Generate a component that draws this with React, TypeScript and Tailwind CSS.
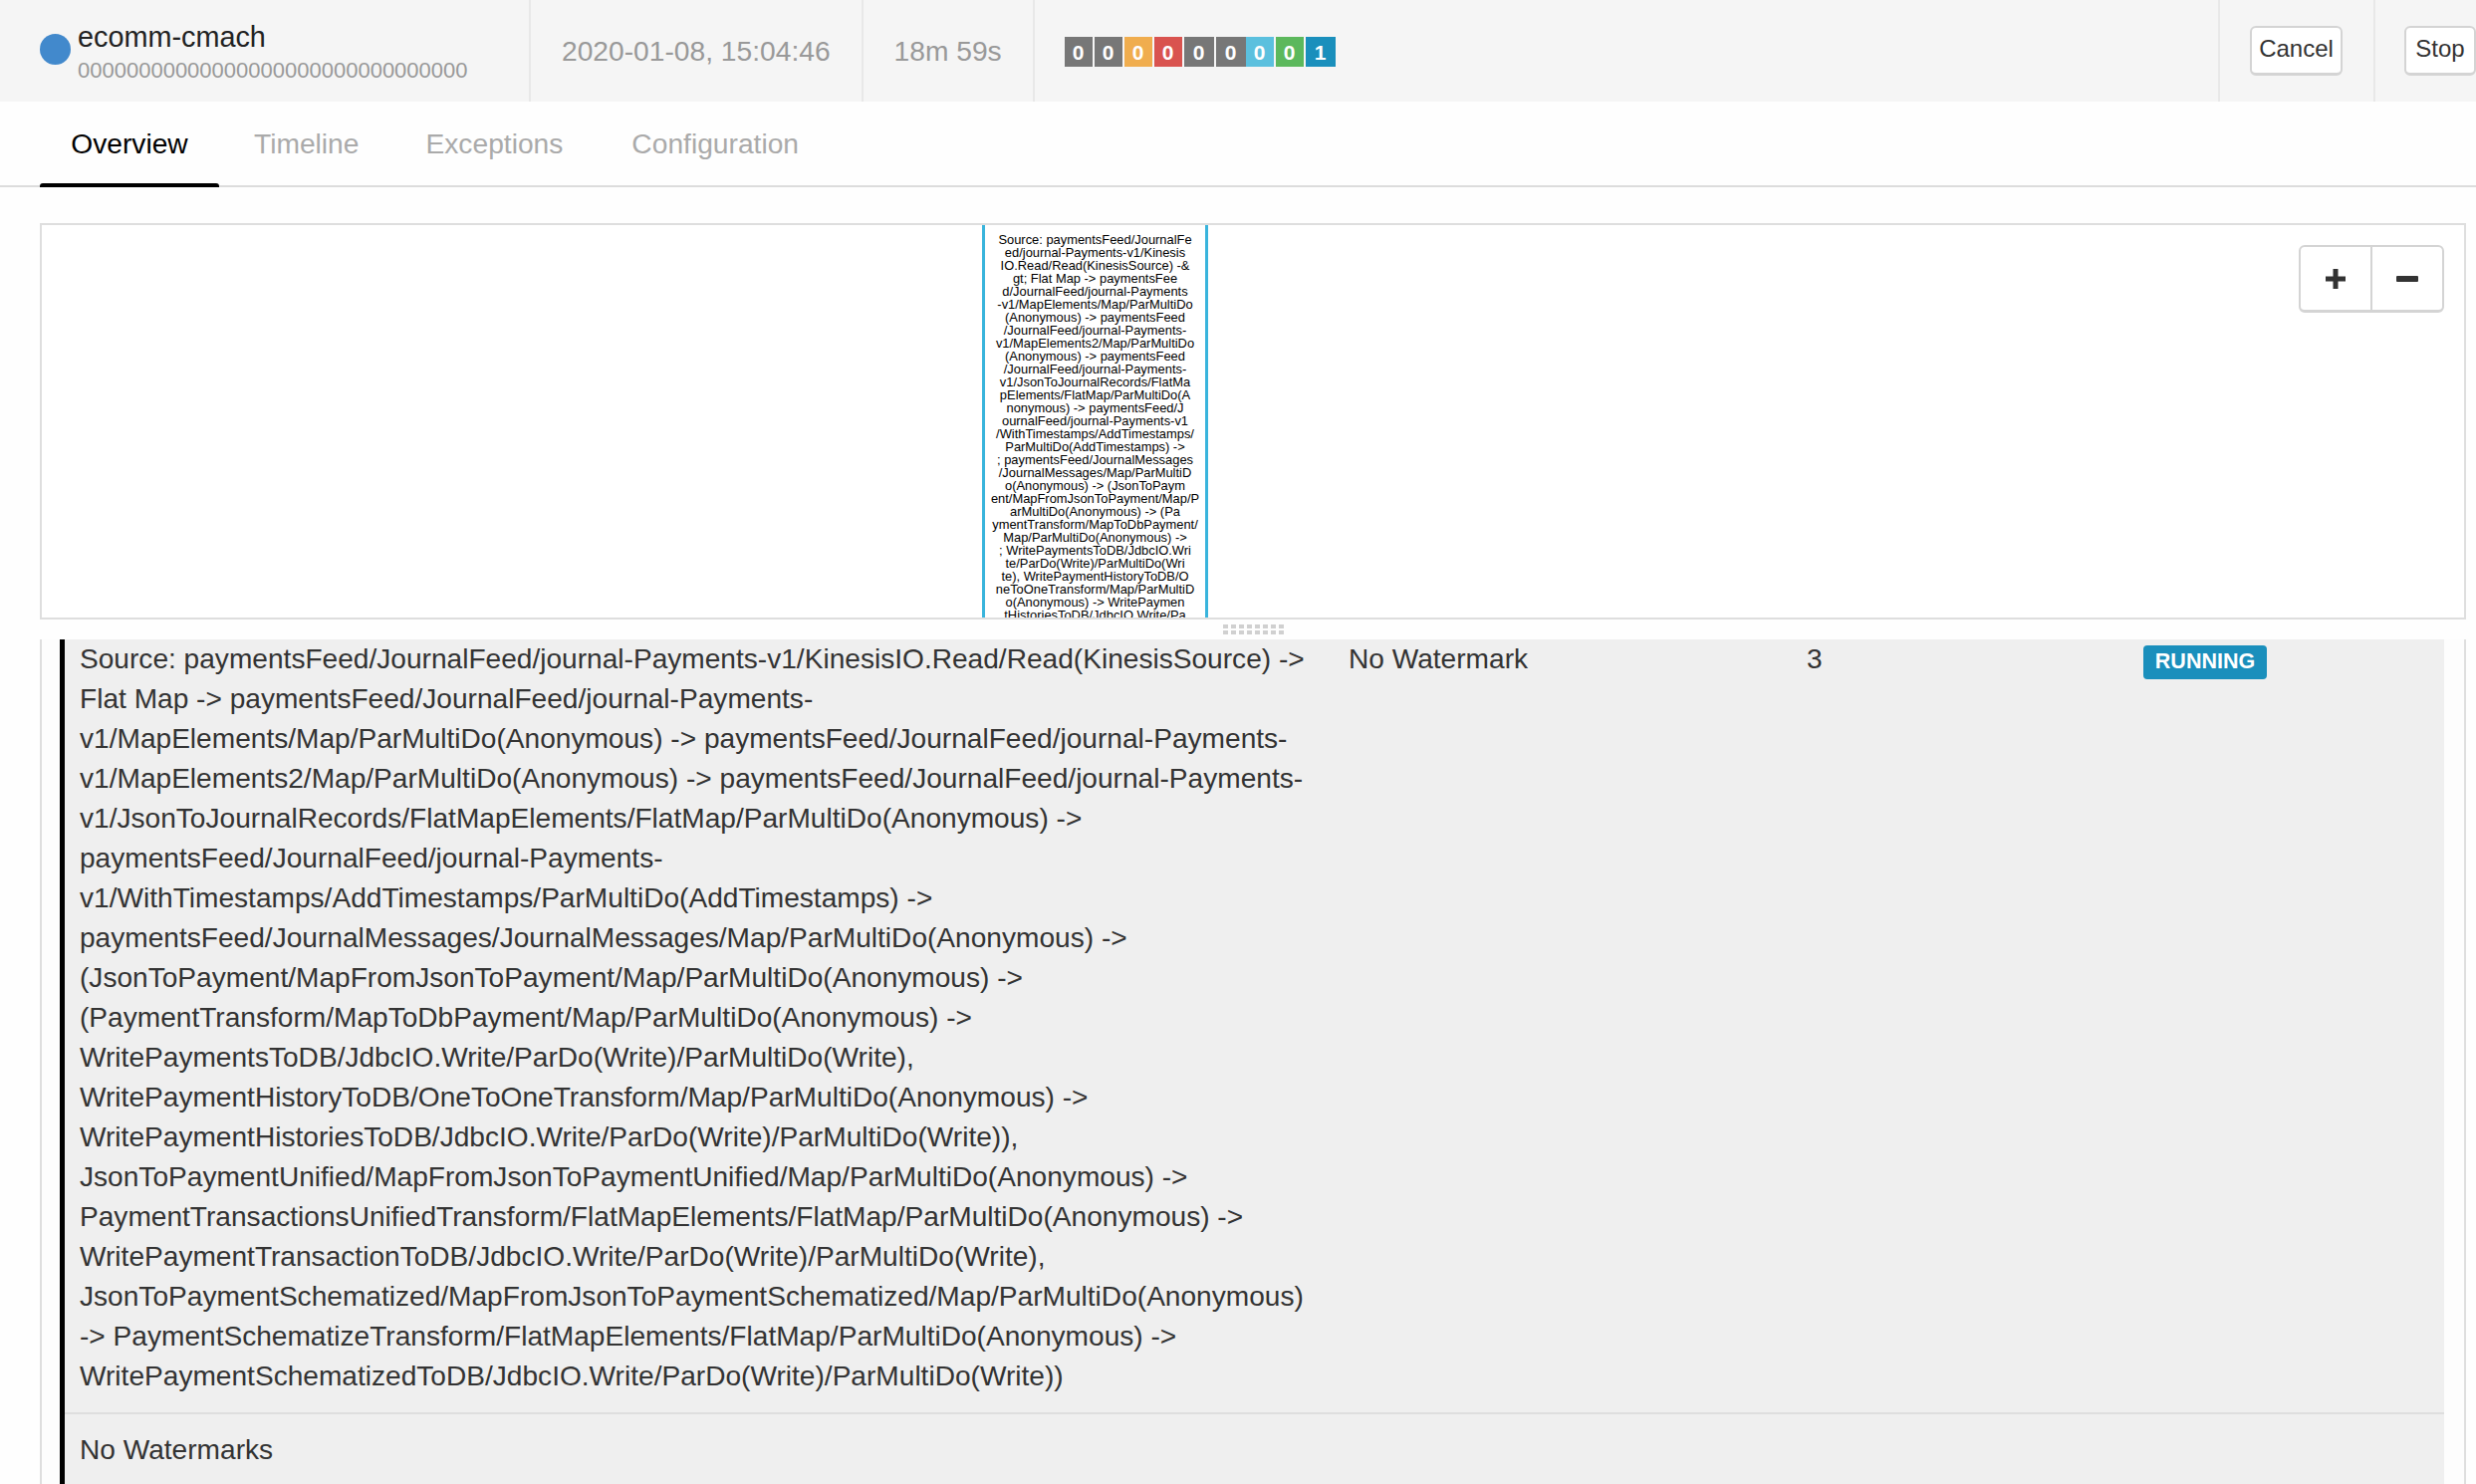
const nodeLines = [
  "Source: paymentsFeed/JournalFe",
  "ed/journal-Payments-v1/Kinesis",
  "IO.Read/Read(KinesisSource) -&",
  "gt; Flat Map -> paymentsFee",
  "d/JournalFeed/journal-Payments",
  "-v1/MapElements/Map/ParMultiDo",
  "(Anonymous) -> paymentsFeed",
  "/JournalFeed/journal-Payments-",
  "v1/MapElements2/Map/ParMultiDo",
  "(Anonymous) -> paymentsFeed",
  "/JournalFeed/journal-Payments-",
  "v1/JsonToJournalRecords/FlatMa",
  "pElements/FlatMap/ParMultiDo(A",
  "nonymous) -> paymentsFeed/J",
  "ournalFeed/journal-Payments-v1",
  "/WithTimestamps/AddTimestamps/",
  "ParMultiDo(AddTimestamps) ->",
  "; paymentsFeed/JournalMessages",
  "/JournalMessages/Map/ParMultiD",
  "o(Anonymous) -> (JsonToPaym",
  "ent/MapFromJsonToPayment/Map/P",
  "arMultiDo(Anonymous) -> (Pa",
  "ymentTransform/MapToDbPayment/",
  "Map/ParMultiDo(Anonymous) ->",
  "; WritePaymentsToDB/JdbcIO.Wri",
  "te/ParDo(Write)/ParMultiDo(Wri",
  "te), WritePaymentHistoryToDB/O",
  "neToOneTransform/Map/ParMultiD",
  "o(Anonymous) -> WritePaymen",
  "tHistoriesToDB/JdbcIO.Write/Pa",
];

const rowLines = [
  "Source: paymentsFeed/JournalFeed/journal-Payments-v1/KinesisIO.Read/Read(KinesisSource) ->",
  "Flat Map -> paymentsFeed/JournalFeed/journal-Payments-",
  "v1/MapElements/Map/ParMultiDo(Anonymous) -> paymentsFeed/JournalFeed/journal-Payments-",
  "v1/MapElements2/Map/ParMultiDo(Anonymous) -> paymentsFeed/JournalFeed/journal-Payments-",
  "v1/JsonToJournalRecords/FlatMapElements/FlatMap/ParMultiDo(Anonymous) ->",
  "paymentsFeed/JournalFeed/journal-Payments-",
  "v1/WithTimestamps/AddTimestamps/ParMultiDo(AddTimestamps) ->",
  "paymentsFeed/JournalMessages/JournalMessages/Map/ParMultiDo(Anonymous) ->",
  "(JsonToPayment/MapFromJsonToPayment/Map/ParMultiDo(Anonymous) ->",
  "(PaymentTransform/MapToDbPayment/Map/ParMultiDo(Anonymous) ->",
  "WritePaymentsToDB/JdbcIO.Write/ParDo(Write)/ParMultiDo(Write),",
  "WritePaymentHistoryToDB/OneToOneTransform/Map/ParMultiDo(Anonymous) ->",
  "WritePaymentHistoriesToDB/JdbcIO.Write/ParDo(Write)/ParMultiDo(Write)),",
  "JsonToPaymentUnified/MapFromJsonToPaymentUnified/Map/ParMultiDo(Anonymous) ->",
  "PaymentTransactionsUnifiedTransform/FlatMapElements/FlatMap/ParMultiDo(Anonymous) ->",
  "WritePaymentTransactionToDB/JdbcIO.Write/ParDo(Write)/ParMultiDo(Write),",
  "JsonToPaymentSchematized/MapFromJsonToPaymentSchematized/Map/ParMultiDo(Anonymous)",
  "-> PaymentSchematizeTransform/FlatMapElements/FlatMap/ParMultiDo(Anonymous) ->",
  "WritePaymentSchematizedToDB/JdbcIO.Write/ParDo(Write)/ParMultiDo(Write))",
];

function Count({ n, className }: { n: number; className: string }) {
  return (
    <span className={`flex h-[30px] items-center justify-center text-[21px] font-bold leading-none text-white ${className}`}>
      {n}
    </span>
  );
}

export default function App() {
  return (
    <div className="h-[1490px] w-[2486px] overflow-hidden bg-[#fefefe] font-['Liberation_Sans',Arial,sans-serif] text-[28.2px] text-[#333]">
      {/* Job header */}
      <div className="flex h-[102px] items-stretch bg-[#f5f5f5]">
        <div className="flex w-[533px] items-center border-r-2 border-[#e8e8e8] pl-[40px]">
          <span className="mt-[-4px] h-[31px] w-[31px] shrink-0 rounded-full bg-[#4289cc]" />
          <div className="ml-[7px] flex flex-col">
            <span className="text-[28.8px] leading-[40px] text-[#222]">ecomm-cmach</span>
            <span className="text-[22px] leading-[28px] text-[#999]">00000000000000000000000000000000</span>
          </div>
        </div>
        <div className="flex items-center border-r-2 border-[#e8e8e8] px-[31px] text-[#999]">2020-01-08, 15:04:46</div>
        <div className="flex items-center border-r-2 border-[#e8e8e8] px-[31px] text-[#999]">18m 59s</div>
        <div className="flex flex-1 items-center pl-[30px]">
          <div className="mt-[2px] flex gap-[2px]">
            <Count n={0} className="w-[28px] bg-[#777]" />
            <Count n={0} className="w-[28px] bg-[#777]" />
            <Count n={0} className="w-[28px] bg-[#f0ad4e]" />
            <Count n={0} className="w-[28px] bg-[#d9534f]" />
            <Count n={0} className="w-[30px] bg-[#777]" />
            <Count n={0} className="w-[30px] bg-[#777]" />
            <Count n={0} className="w-[28px] bg-[#5bc0de] ml-[-2px]" />
            <Count n={0} className="w-[28px] bg-[#5cb85c]" />
            <Count n={1} className="w-[30px] bg-[#1a8fbc]" />
          </div>
        </div>
        <div className="flex items-center border-l-2 border-[#e8e8e8] pl-[30px] pr-[31px]">
          <button className="h-[50px] w-[93px] rounded-[6px] border-2 border-b-[3px] border-[#d4d4d4] bg-white pb-[3px] text-[24px] text-[#333]">
            Cancel
          </button>
        </div>
        <div className="flex w-[103px] items-center border-l-2 border-[#e8e8e8] pl-[29px]">
          <button className="h-[50px] w-[72px] rounded-[6px] border-2 border-b-[3px] border-[#d4d4d4] bg-white pb-[3px] text-[24px] text-[#333]">
            Stop
          </button>
        </div>
      </div>

      {/* Tabs */}
      <div className="flex h-[86px] border-b-2 border-[#dcdcdc] pl-[40px]">
        <div className="relative flex w-[180px] items-center justify-center pt-[1px] text-black">
          Overview
          <span className="absolute bottom-[-2px] left-0 right-0 h-[4px] rounded-t-[3px] bg-black" />
        </div>
        <div className="ml-[35px] flex items-center pt-[1px] text-[#aaa]">Timeline</div>
        <div className="ml-[67px] flex items-center pt-[1px] text-[#aaa]">Exceptions</div>
        <div className="ml-[69px] flex items-center pt-[1px] text-[#aaa]">Configuration</div>
      </div>

      {/* Graph canvas */}
      <div className="relative ml-[40px] mr-[10px] mt-[36px] h-[398px] overflow-hidden border-2 border-[#dedede] bg-white">
        <div className="ml-[944px] h-full w-[227px] border-x-[3px] border-[#39b4dc] pt-[8px] text-center text-[12.9px] leading-[13px] text-black">
          {nodeLines.map((l, i) => (
            <div key={i} className="whitespace-nowrap">{l}</div>
          ))}
        </div>
        <div className="absolute right-[20px] top-[20px] flex h-[68px] w-[146px] overflow-hidden rounded-[6px] border-2 border-b-[3px] border-[#d4d4d4] bg-white">
          <div className="flex flex-1 items-center justify-center border-r-2 border-[#d4d4d4]">
            <svg width="22" height="22" viewBox="0 0 22 22"><path d="M8.5 1h5v7.5H21v5h-7.5V21h-5v-7.5H1v-5h7.5z" fill="#333" /></svg>
          </div>
          <div className="flex flex-1 items-center justify-center">
            <svg width="22" height="22" viewBox="0 0 22 22"><rect x="0" y="8" width="22" height="6" rx="1" fill="#333" /></svg>
          </div>
        </div>
      </div>

      {/* Resize handle */}
      <div className="flex h-[20px] items-center justify-start pl-[1228px]">
        <svg width="62" height="10" viewBox="0 0 62 10">
          {[0, 8, 16, 24, 32, 40, 48, 56].map((x) => (
            <g key={x} fill="#d0d0d0">
              <rect x={x} y="0" width="5" height="4" />
              <rect x={x} y="6" width="5" height="4" />
            </g>
          ))}
        </svg>
      </div>

      {/* Vertices table */}
      <div className="ml-[40px] mr-[10px] h-[900px] border-x-2 border-[#dedede] bg-[#fdfdfd] pl-[18px] pr-[20px]">
        <div className="border-l-[5px] border-black bg-[#efefef] text-[28.1px] text-[#333]">
          <div className="grid grid-cols-[1274px_460px_338px_1fr] border-b-2 border-[#dedede] pb-[16px] pl-[15px] leading-[40px]">
            <div className="whitespace-nowrap">
              {rowLines.map((l, i) => (
                <div key={i}>{l}</div>
              ))}
            </div>
            <div>No Watermark</div>
            <div>3</div>
            <div className="pt-[6px]">
              <span className="flex h-[34px] w-[124px] items-center justify-center rounded-[4px] bg-[#1a8fbc] pb-[1px] text-[21.5px] font-bold leading-none text-white">
                RUNNING
              </span>
            </div>
          </div>
          <div className="pb-[16px] pl-[15px] pt-[16px] leading-[40px]">No Watermarks</div>
        </div>
      </div>
    </div>
  );
}
